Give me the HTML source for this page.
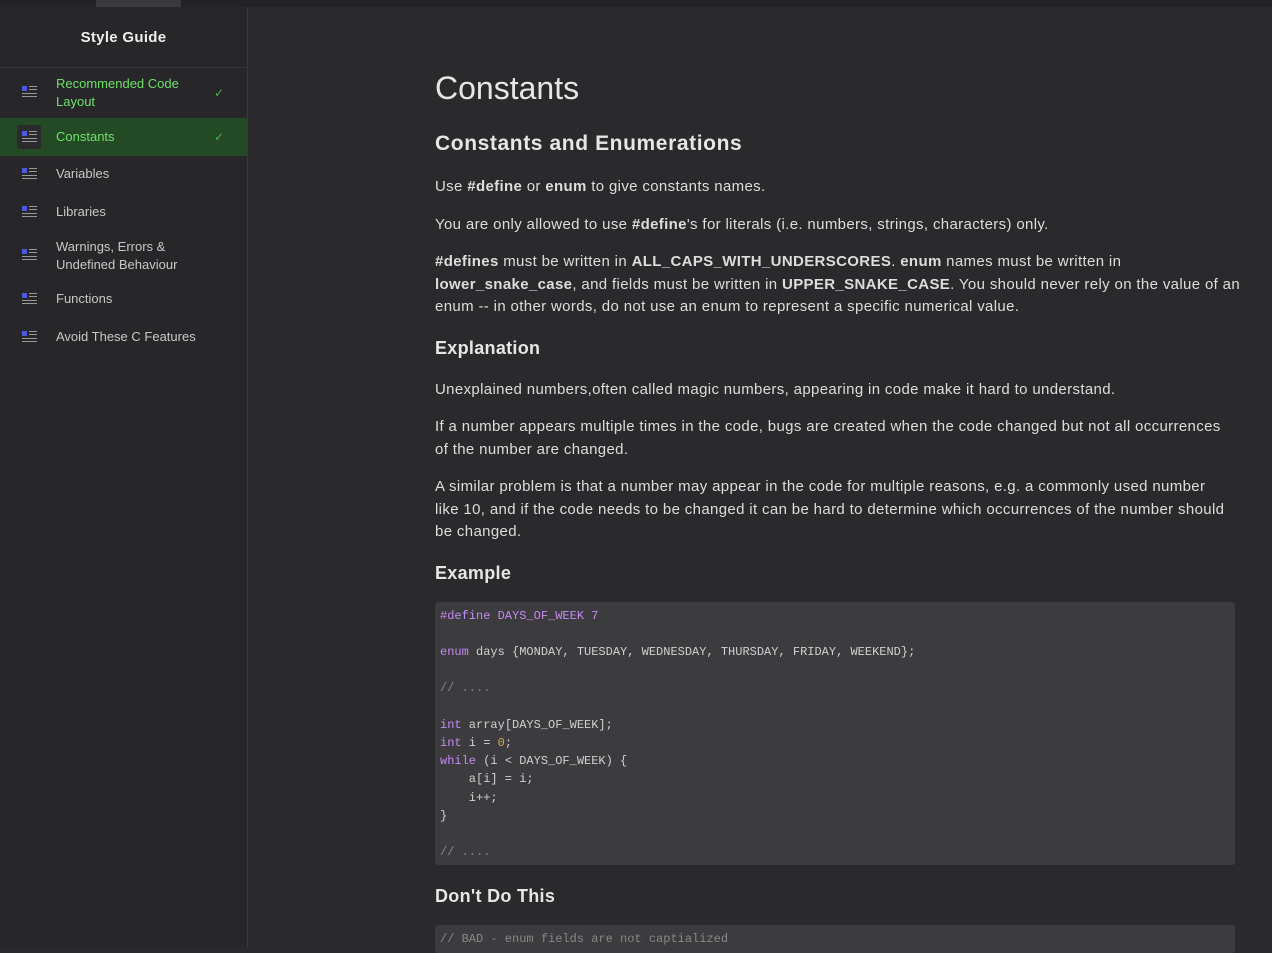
<!DOCTYPE html><html><head><style>
body{margin:0;width:1272px;height:947px;overflow:hidden;background:#2a2a2c;font-family:"Liberation Sans",sans-serif;color:#e6e6e6;position:relative}
.top{position:absolute;left:0;top:0;width:1272px;height:7px;background:#232325}
.tab{position:absolute;left:96px;top:0;width:85px;height:7px;background:#3a3a3c}
.side{position:absolute;left:0;top:7px;width:247px;height:940px;background:#272729;border-right:1px solid #3a3a3c}
.side h3{margin:0;height:60px;line-height:62px;text-align:center;font-size:15px;font-weight:bold;color:#eee;border-bottom:1px solid #37373a;letter-spacing:0.3px}
.it{position:absolute;left:0;width:247px;font-size:13px;line-height:18px;color:#c8c8c8}
.it .t{position:absolute;left:56px}
.ic{position:absolute;left:22px;width:15px;height:14px}
.ic i{position:absolute;background:#999;height:1px}
.ic b{position:absolute;left:0;top:1px;width:5px;height:5px;background:#4a5ae0}
.ck{position:absolute;left:214px;color:#4caf50;font-size:12px}
.g{color:#6ee06a}
main{position:absolute;left:435px;top:60px;width:800px}
h1{font-size:32px;font-weight:normal;margin:9px 0 0;line-height:38px}
h2{font-size:21px;margin:22px 0 0;line-height:30px;letter-spacing:0.6px}
h4{font-size:18px;margin:0;line-height:30px;letter-spacing:0.3px}
p{font-size:15px;line-height:22.5px;margin:0;color:#ddd;letter-spacing:0.35px;white-space:nowrap}
pre{background:#3c3c3f;border-radius:3px;margin:0;padding:5px 5px 4px;font-family:"Liberation Mono",monospace;font-size:12px;line-height:18.2px;color:#d0d0d0}
.k{color:#c58af0}.n{color:#e0a050}.c{color:#888}
</style></head><body>
<div class="top"></div><div class="tab"></div>
<div class="side"><h3>Style Guide</h3>
<div class="it" style="top:68px;height:36px"><div class="ic" style="top:10px"><b></b><i style="left:7px;top:1px;width:8px"></i><i style="left:7px;top:4px;width:8px"></i><i style="left:0;top:8px;width:15px"></i><i style="left:0;top:11px;width:15px"></i></div><div class="t g">Recommended Code<br>Layout</div><div class="ck" style="top:9px">✓</div></div>
<div class="it" style="top:111px;height:38px;background:#234a24"><div style="position:absolute;left:17px;top:7px;width:24px;height:24px;background:#2b2b2d;border-radius:2px"></div><div class="ic" style="top:12px"><b></b><i style="left:7px;top:1px;width:8px"></i><i style="left:7px;top:4px;width:8px"></i><i style="left:0;top:8px;width:15px"></i><i style="left:0;top:11px;width:15px"></i></div><div class="t g" style="top:10px">Constants</div><div class="ck" style="top:10px">✓</div></div>
<div class="it" style="top:158px"><div class="ic" style="top:2px"><b></b><i style="left:7px;top:1px;width:8px"></i><i style="left:7px;top:4px;width:8px"></i><i style="left:0;top:8px;width:15px"></i><i style="left:0;top:11px;width:15px"></i></div><div class="t">Variables</div></div>
<div class="it" style="top:196px"><div class="ic" style="top:2px"><b></b><i style="left:7px;top:1px;width:8px"></i><i style="left:7px;top:4px;width:8px"></i><i style="left:0;top:8px;width:15px"></i><i style="left:0;top:11px;width:15px"></i></div><div class="t">Libraries</div></div>
<div class="it" style="top:231px"><div class="ic" style="top:10px"><b></b><i style="left:7px;top:1px;width:8px"></i><i style="left:7px;top:4px;width:8px"></i><i style="left:0;top:8px;width:15px"></i><i style="left:0;top:11px;width:15px"></i></div><div class="t">Warnings, Errors &amp;<br>Undefined Behaviour</div></div>
<div class="it" style="top:283px"><div class="ic" style="top:2px"><b></b><i style="left:7px;top:1px;width:8px"></i><i style="left:7px;top:4px;width:8px"></i><i style="left:0;top:8px;width:15px"></i><i style="left:0;top:11px;width:15px"></i></div><div class="t">Functions</div></div>
<div class="it" style="top:321px"><div class="ic" style="top:2px"><b></b><i style="left:7px;top:1px;width:8px"></i><i style="left:7px;top:4px;width:8px"></i><i style="left:0;top:8px;width:15px"></i><i style="left:0;top:11px;width:15px"></i></div><div class="t">Avoid These C Features</div></div>
</div>
<main>
<h1>Constants</h1>
<h2>Constants and Enumerations</h2>
<p style="margin-top:17px">Use <b>#define</b> or <b>enum</b> to give constants names.</p>
<p style="margin-top:15px">You are only allowed to use <b>#define</b>'s for literals (i.e. numbers, strings, characters) only.</p>
<p style="margin-top:15px"><b>#defines</b> must be written in <b>ALL_CAPS_WITH_UNDERSCORES</b>. <b>enum</b> names must be written in<br><b>lower_snake_case</b>, and fields must be written in <b>UPPER_SNAKE_CASE</b>. You should never rely on the value of an<br>enum -- in other words, do not use an enum to represent a specific numerical value.</p>
<h4 style="margin-top:14px">Explanation</h4>
<p style="margin-top:16px">Unexplained numbers,often called magic numbers, appearing in code make it hard to understand.</p>
<p style="margin-top:15px">If a number appears multiple times in the code, bugs are created when the code changed but not all occurrences<br>of the number are changed.</p>
<p style="margin-top:15px">A similar problem is that a number may appear in the code for multiple reasons, e.g. a commonly used number<br>like 10, and if the code needs to be changed it can be hard to determine which occurrences of the number should<br>be changed.</p>
<h4 style="margin-top:14px">Example</h4>
<pre style="margin-top:14px"><span class="k">#define DAYS_OF_WEEK 7</span>

<span class="k">enum</span> days {MONDAY, TUESDAY, WEDNESDAY, THURSDAY, FRIDAY, WEEKEND};

<span class="c">// ....</span>

<span class="k">int</span> array[DAYS_OF_WEEK];
<span class="k">int</span> i = <span class="n">0</span>;
<span class="k">while</span> (i &lt; DAYS_OF_WEEK) {
    a[i] = i;
    i++;
}

<span class="c">// ....</span></pre>
<h4 style="margin-top:16px">Don't Do This</h4>
<pre style="margin-top:14px"><span class="c">// BAD - enum fields are not captialized</span>
</pre>
</main>
</body></html>
